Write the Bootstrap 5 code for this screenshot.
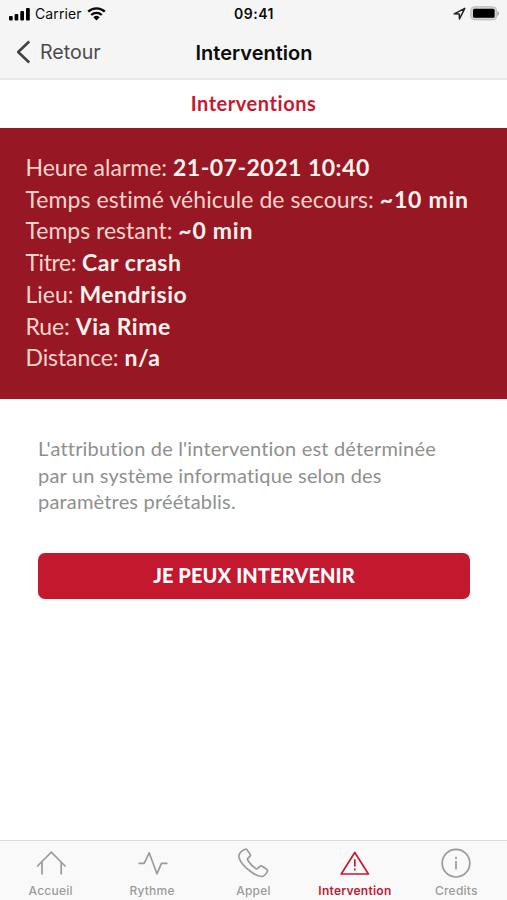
<!DOCTYPE html>
<html lang="fr">
<head>
<meta charset="utf-8">
<meta name="viewport" content="width=device-width, initial-scale=1">
<title>Intervention</title>
<link href="https://cdn.jsdelivr.net/npm/bootstrap@5.3.0/dist/css/bootstrap.min.css" rel="stylesheet">
<style>
body{font-family:Lato,"Open Sans",sans-serif;font-variant-ligatures:none;background:#fff;height:900px;overflow:hidden}
.sys{font-family:Inter,Roboto,sans-serif}
.topbar{background:#f5f5f5;height:80px;border-bottom:2px solid #e9e9ea;color:#0b0b0b}
.status{height:27px;font-size:14px;padding:0 8px 0 9px}
.status>div,.titlebar>div{flex:1 1 0}
.clock{font-weight:600;font-size:14px;letter-spacing:.5px}
.carrier{margin:0 5px 0 5px;letter-spacing:.1px}
.titlebar{height:51px;padding:0 16px 0 17px}
.back{color:#4b4b4d;font-size:19.6px}
.back svg{margin-right:8px}
.back span{padding-top:1px}
.page-title{font-weight:600;font-size:20px;padding-top:1px}
.tabhead{height:48px;padding-bottom:3px;color:#c41a30;font-weight:700;font-size:20px;letter-spacing:.55px}
.panel{background:#981724;color:#f9d5cc;height:271px;padding:24px 0 0 25.500px;font-size:23px;line-height:31.7px;white-space:nowrap}
.panel b{color:#fff3ee;font-weight:700;letter-spacing:.5px}
.panel .airy{letter-spacing:.75px}
.wide{letter-spacing:.08px}
.tight{letter-spacing:-.4px}
.snug{letter-spacing:-.1px}
.content{padding:36px 37px 0 38px}
.note{color:#8f8f8f;font-size:20px;line-height:26.7px;letter-spacing:.18px;margin-bottom:38px}
.go,.go:hover{background:#c4182f;color:#fff;height:46px;border:0;border-radius:7px;font-weight:900;font-size:20px;letter-spacing:.1px}
.go span{display:block;padding-bottom:2px}
.tabs{height:60px;background:#f9f9f9;border-top:1px solid #dcdcdc;color:#9b9b9b;font-size:12px;font-weight:500;letter-spacing:.25px}
.tabs>a{flex:1 1 0;color:inherit;padding-top:6px;line-height:19px}
.tabs svg{fill:none;stroke:currentColor;stroke-width:1.7;display:block;flex:none;margin-bottom:2px}
.tabs>.on{color:#c41a38;font-weight:600}
</style>
</head>
<body class="d-flex flex-column">
<header class="topbar sys flex-shrink-0">
<div class="status d-flex align-items-center">
<div class="d-flex align-items-center">
<svg width="21" height="14" viewBox="0 0 21 14"><rect y="9" width="3.700" height="4.500" rx="1"/><rect x="5.600" y="7" width="3.700" height="6.500" rx="1"/><rect x="11.300" y="4" width="3.700" height="9.500" rx="1"/><rect x="17" y="1" width="3.800" height="12.500" rx="1"/></svg>
<span class="carrier">Carrier</span>
<svg width="19" height="15" viewBox="0 0 19 15"><g fill="none" stroke="#0b0b0b" stroke-width="2.400"><path d="M1.200 5.700a12 12 0 0 1 16.600 0M4.200 9a7.700 7.700 0 0 1 10.600 0"/></g><path d="M6.400 11.200a4.600 4.600 0 0 1 6.200 0l-3.100 3.200z"/></svg>
</div>
<span class="clock">09:41</span>
<div class="d-flex align-items-center justify-content-end">
<svg class="me-1" width="13" height="13" viewBox="0 0 13 13"><path d="M11.800 1.300 1.200 6.800l5 .3.300 4.800z" fill="none" stroke="#222" stroke-width="1.500" stroke-linejoin="round"/></svg>
<svg width="29" height="15" viewBox="0 0 29 15"><rect x=".7" y=".7" width="26" height="13.200" rx="4" fill="#d2d2d2" stroke="#bdbdbd"/><rect x="3" y="2.800" width="21.600" height="9" rx="1.500" fill="#000"/><path d="M27.300 5v5q2-1 2-2.500t-2-2.500" fill="#aaa"/></svg>
</div>
</div>
<div class="titlebar d-flex align-items-center">
<div class="back d-flex align-items-center"><svg width="15" height="24" viewBox="0 0 15 24"><path d="M12.200 1.500 1.200 12l11 10.500" fill="none" stroke="#444" stroke-width="2.600"/></svg><span>Retour</span></div>
<span class="page-title">Intervention</span>
<div></div>
</div>
</header>
<div class="tabhead d-flex align-items-center justify-content-center flex-shrink-0">Interventions</div>
<section class="panel flex-shrink-0">
<div><span>Heure alarme:</span> <b>21-07-2021 10:40</b></div>
<div><span class="wide">Temps estimé véhicule de secours:</span> <b class="airy">~10 min</b></div>
<div><span>Temps restant:</span> <b class="airy">~0 min</b></div>
<div><span class="tight">Titre:</span> <b>Car crash</b></div>
<div><span>Lieu:</span> <b>Mendrisio</b></div>
<div><span class="snug">Rue:</span> <b>Via Rime</b></div>
<div><span class="snug">Distance:</span> <b>n/a</b></div>
</section>
<main class="content flex-grow-1">
<div class="note">L'attribution de l'intervention est déterminée<br>par un système informatique selon des<br>paramètres préétablis.</div>
<button class="go btn w-100 p-0"><span>JE PEUX INTERVENIR</span></button>
</main>
<nav class="tabs sys d-flex flex-shrink-0">
<a class="d-flex flex-column align-items-center text-decoration-none"><svg width="32" height="32" viewBox="0 0 32 32"><path d="M2 19.500 16.300 5.200 30.600 19.500M7 15v12.500M26.200 15v12.500"/></svg>Accueil</a>
<a class="d-flex flex-column align-items-center text-decoration-none"><svg width="32" height="32" viewBox="0 0 32 32"><path d="M2.500 16.300h5.700l5-10.500 7.700 21 4.600-10.500h6" stroke-linejoin="round"/></svg>Rythme</a>
<a class="d-flex flex-column align-items-center text-decoration-none"><svg width="32" height="32" viewBox="0 0 32 32"><path d="M7.300 2.200q1-.3 1.800.7l3 4.500q.6 1-.3 2l-1.900 1.900q-.8 1 0 2.200 3.200 5.100 7.800 8 1.200.7 2.100-.1l2-2q1-.9 2.200-.2l4.800 3.100q1.200 1 .5 2.200-2 4.300-5 4.900-4.500.8-12.300-5.400Q2.200 16.500.9 9.800q-.4-4.800 6.400-7.600z"/></svg>Appel</a>
<a class="on d-flex flex-column align-items-center text-decoration-none"><svg width="32" height="32" viewBox="0 0 32 32"><path d="M15.800 5.500 2.200 27h27.200zM15.800 12.200v7.300M15.800 21.500v2" stroke-linejoin="round"/></svg>Intervention</a>
<a class="d-flex flex-column align-items-center text-decoration-none"><svg width="32" height="32" viewBox="0 0 32 32"><circle cx="16" cy="16.200" r="13.800"/><path d="M16 14v8.500M16 9.800v2.200"/></svg>Credits</a>
</nav>
</body>
</html>
